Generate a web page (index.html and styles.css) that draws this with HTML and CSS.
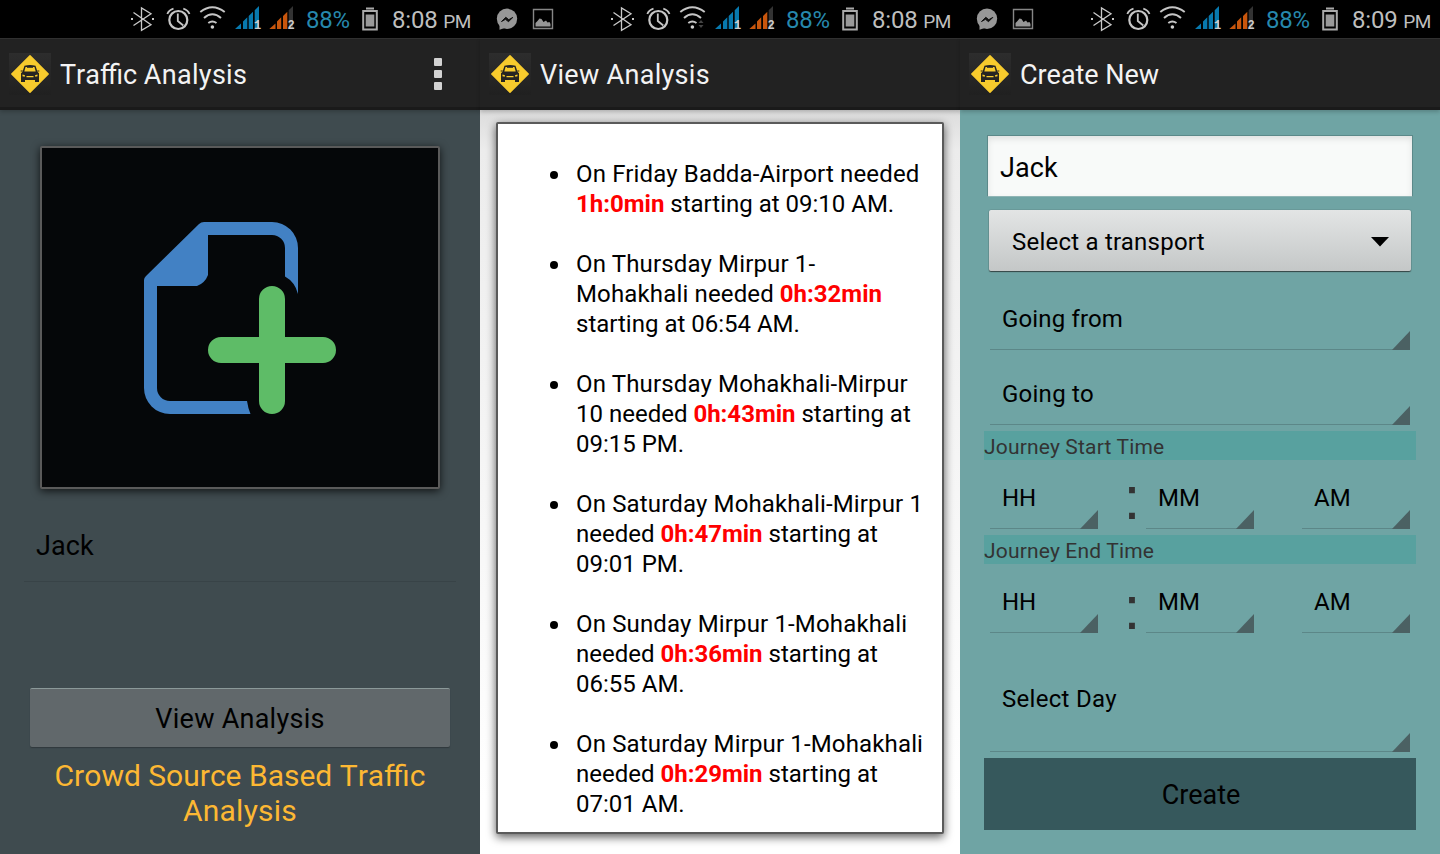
FILE: index.html
```html
<!DOCTYPE html>
<html lang="en">
<head>
<meta charset="utf-8">
<title>Traffic Analysis</title>
<link rel="stylesheet" href="styles.css">
</head>
<body>
<svg class="defs" aria-hidden="true">
  <symbol id="chat" viewBox="0 0 22 38">
    <circle cx="11" cy="18.800" r="10.200" fill="#979797"/>
    <path d="M3.500 23v6.700l6-2z" fill="#979797"/>
    <path d="M5.500 21.500l4.300-4.200 3 2.400 4-2.300-4.300 4.300-3-2.400z" fill="#111" stroke="#111"/>
  </symbol>
  <symbol id="picture" viewBox="0 0 22 22">
    <path d="M1.500 1.500h19v19h-19z" fill="none" stroke="#868686" stroke-width="1.400"/>
    <path d="M3.500 18.500v-3.500l2-2 2-2.500 2 .5 2 3 2.500-1.500 1.500 2 2-.5 1 2v2.500z" fill="#979797"/>
  </symbol>
  <symbol id="radio" viewBox="130 0 166 38">
    <path d="M133.500 12.500L151 24.700l-9.500 5.700V8l9.500 5.700L133.500 25.500" fill="none" stroke="#c9c9c9" stroke-width="1.300"/>
    <path d="M131 18h2v2h-2zM152 18h2v2h-2z" fill="#c9c9c9"/>
    <g fill="none" stroke="#c6c6c6">
      <circle cx="178.300" cy="20" r="9" stroke-width="2.200"/>
      <path d="M177.800 13.500V21l5.500 4.500" stroke-width="1.800"/>
      <path d="M167.300 14Q169 10 173.500 8.700M189.500 14q-1.700-4-6.200-5.300" stroke-width="1.800"/>
      <path d="M200.300 12Q212.300 2.500 224.700 12" stroke-width="2"/>
      <path d="M204 18Q212.300 10.500 221 18M208.300 23Q212.300 20 216.500 23" stroke-width="2"/>
    </g>
    <circle cx="212.400" cy="27" r="1.800" fill="#d0d0d0"/>
    <path d="M235 29l6-5.500V29zM243 29v-7.500l4.300-4.200V29zM248.700 29V16l4.300-4.200V29zM254.700 29V10.200L259 6v23z" fill="#0879ae"/>
    <path d="M269.300 29l6.200-5.500V29zM277 29v-7.500l4.200-4.200V29zM283 29V16l4.300-4.200V29z" fill="#c8560d"/>
    <path d="M288.700 29V10.200L293 6v23z" fill="#333"/>
    <text x="254" y="29" class="sim">1</text>
    <text x="287.500" y="29" class="sim">2</text>
  </symbol>
  <symbol id="battery" viewBox="0 0 16 24">
    <path d="M4 1.500h8M1.200 4h13.600v18.500H1.200z" fill="none" stroke="#a9a9a9" stroke-width="2"/>
    <path d="M3.700 7.500h8.600v12H3.700z" fill="#999"/>
  </symbol>
  <symbol id="taxi" viewBox="0 0 42 42">
    <path d="M21 2.800L39.200 21 21 39.200 2.800 21z" fill="#f7cb2d" stroke="#f7cb2d" stroke-width="1.500" stroke-linejoin="round"/>
    <path d="M15.500 12.700q5.500-1.200 11 0l2 6.100 1.500 1.500V29h-4v-2H16v2h-4v-8.700l1.500-1.500z" fill="#252422"/>
    <path d="M16.500 14h9l1.200 4.500H15.300z" fill="#f7cb2d"/>
    <path d="M18 14.500h6" stroke="#252422" stroke-width=".8"/>
    <path d="M11.700 18h2M28.300 18h2" stroke="#252422" stroke-width="1.200"/>
    <path d="M13.500 21.500l2.500.8-.3 1.500-2.200-.5zM28.500 21.500l-2.500.8.3 1.500 2.200-.5zM17.500 23h7v1.300h-7z" fill="#f7cb2d"/>
  </symbol>
</svg>
<main class="screens">
  <section class="phone dark">
    <div class="status">
      <span class="push"></span>
      <svg class="radio"><use href="#radio"/></svg>
      <span class="percent">88%</span>
      <svg class="battery"><use href="#battery"/></svg>
      <span class="clock">8:08 <small>PM</small></span>
    </div>
    <header class="bar">
      <svg class="logo"><use href="#taxi"/></svg>
      <h1 class="title">Traffic <span class="wide">Analysis</span></h1>
      <span class="overflow"><i></i><i></i><i></i></span>
    </header>
    <div class="home">
      <div class="add-card">
        <svg class="add" viewBox="0 0 192 192">
          <path fill="#4281c4" d="M60 0H128A26 26 0 0 1 154 26V72Q151 60 141 54.500V26A13 13 0 0 0 128 13H64V53Q61 61 53 64H13V166A13 13 0 0 0 26 179H103Q104 186 106.500 192H26A26 26 0 0 1 0 166V58Q0 56 2 54L55 2Q57 0 60 0z"/>
          <path fill="#5ebc67" d="M115 115V77a13 13 0 0 1 26 0v38h38a13 13 0 0 1 0 26h-38v38a13 13 0 0 1-26 0v-38H77a13 13 0 0 1 0-26z"/>
        </svg>
      </div>
      <div class="name">Jack</div>
      <div class="view-button"><span class="wide">View Analysis</span></div>
      <p class="slogan">Crowd Source Based Traffic<br><span class="wide">Analysis</span></p>
    </div>
  </section>

  <section class="phone light">
    <div class="status">
      <svg class="messenger"><use href="#chat"/></svg>
      <svg class="picture"><use href="#picture"/></svg>
      <span class="push"></span>
      <svg class="radio"><use href="#radio"/><path d="M88.500 23l2.500-3 2.500 3zM88.500 25l2.500 3 2.500-3z" fill="#444"/></svg>
      <span class="percent">88%</span>
      <svg class="battery"><use href="#battery"/></svg>
      <span class="clock">8:08 <small>PM</small></span>
    </div>
    <header class="bar">
      <svg class="logo"><use href="#taxi"/></svg>
      <h1 class="title"><span class="wide">View Analysis</span></h1>
    </header>
    <div class="report">
      <ul class="trips">
        <li><span class="route">On Friday Badda-Airport needed</span><br><b>1h:0min</b> starting at 09:10 AM.</li>
        <li><span class="route">On Thursday Mirpur 1-<br>Mohakhali needed</span> <b>0h:32min</b><br>starting at 06:54 AM.</li>
        <li><span class="route">On Thursday Mohakhali-Mirpur</span><br>10 needed <b>0h:43min</b> starting at<br>09:15 PM.</li>
        <li><span class="route">On Saturday Mohakhali-Mirpur 1</span><br>needed <b>0h:47min</b> starting at<br>09:01 PM.</li>
        <li><span class="route">On Sunday Mirpur 1-Mohakhali</span><br>needed <b>0h:36min</b> starting at<br>06:55 AM.</li>
        <li><span class="route">On Saturday Mirpur 1-Mohakhali</span><br>needed <b>0h:29min</b> starting at<br>07:01 AM.</li>
      </ul>
    </div>
  </section>

  <section class="phone teal">
    <div class="status">
      <svg class="messenger"><use href="#chat"/></svg>
      <svg class="picture"><use href="#picture"/></svg>
      <span class="push"></span>
      <svg class="radio"><use href="#radio"/></svg>
      <span class="percent">88%</span>
      <svg class="battery"><use href="#battery"/></svg>
      <span class="clock">8:09 <small>PM</small></span>
    </div>
    <header class="bar">
      <svg class="logo"><use href="#taxi"/></svg>
      <h1 class="title short">Create New</h1>
    </header>
    <div class="form">
      <div class="field">Jack</div>
      <div class="transport"><span>Select a transport</span><svg class="caret" viewBox="0 0 18 10"><path d="M0 0h18L9 9.500z"/></svg></div>
      <div class="spinner from">Going from</div>
      <div class="spinner to">Going to</div>
      <div class="label">Journey Start Time</div>
      <div class="time">
        <div class="spinner">HH</div><span class="colon">:</span><div class="spinner">MM</div><div class="spinner last">AM</div>
      </div>
      <div class="label">Journey End Time</div>
      <div class="time">
        <div class="spinner">HH</div><span class="colon low">:</span><div class="spinner">MM</div><div class="spinner last">AM</div>
      </div>
      <div class="spinner day">Select Day</div>
      <div class="create">Create</div>
    </div>
  </section>
</main>
</body>
</html>
```
FILE: styles.css
```css
* { box-sizing: border-box; }
body { margin: 0; font-family: Roboto, "Noto Sans", sans-serif; color: #000; }
.defs { position: absolute; width: 0; height: 0; overflow: visible; }
.defs symbol { overflow: visible; }
.screens { display: grid; grid-template-columns: repeat(3, 480px); height: 854px; overflow: hidden; }
.phone { height: 854px; display: flex; flex-direction: column; }
.dark { background: #3f4b4f; }
.light { background: linear-gradient(#dcdcdc 110px, #ececec 150px, #fff 800px); }
.teal { background: #6fa4a4; }
.wide { letter-spacing: .25px; }

/* Status bar */
.status { display: flex; height: 38px; background: #000; flex: none; }
.push { flex: 1; }
.messenger { width: 22px; height: 38px; margin-left: 16px; }
.picture { width: 22px; height: 22px; margin: 8px 0 0 14px; }
.radio { width: 166px; height: 38px; overflow: visible; }
.sim { font: bold 12px "Liberation Mono", monospace; fill: #ccc; }
.percent { width: 55px; margin-left: 10px; font-size: 24px; letter-spacing: -.3px; line-height: 40px; color: #2688ad; }
.battery { width: 16px; height: 24px; margin: 7px 0 0 1px; }
.clock { width: 88px; margin-left: 14px; font-size: 24px; letter-spacing: -.2px; line-height: 40px; color: #bebebe; white-space: nowrap; }
.clock small { font-size: 19px; letter-spacing: -.5px; }

/* Action bar */
.bar { display: flex; height: 72px; flex: none; padding: 14px 38px 0 9px; background: #222; border-top: 1px solid #303030; border-bottom: 3px solid #1a1a1a; box-shadow: 0 2px 4px rgba(0, 0, 0, .2); }
.logo { width: 42px; height: 42px; background: linear-gradient(#2d2d2d, #202020); }
.title { flex: 1; margin: 0 0 0 9px; font-size: 27px; font-weight: 400; line-height: 44px; color: #f3f3f3; font-kerning: none; }
.title .wide { letter-spacing: .3px; }
.title.short { letter-spacing: -.05px; }
.overflow { display: grid; gap: 4px; align-content: start; padding-top: 5px; }
.overflow i { width: 8px; height: 8px; border-radius: 1px; background: #d2d2d2; }

/* Home */
.home { display: flex; flex-direction: column; padding: 36px 24px 0; }
.add-card { height: 343px; margin: 0 16px; padding: 74px 0 0 102px; background: #050709; border: 2px solid #5a5a5a; border-radius: 2px; box-shadow: 0 2px 9px rgba(0, 0, 0, .75); }
.add { display: block; width: 192px; height: 192px; }
.name { height: 93px; padding: 36px 12px 0; border-bottom: 1px solid #384347; font-size: 27px; line-height: 42px; letter-spacing: .1px; }
.view-button { height: 59px; margin: 106px 6px 0; background: #61686b; border-top: 1px solid #8b9999; border-radius: 2px; box-shadow: 0 1px 1px #30393c; text-align: center; font-size: 27px; line-height: 60px; }
.slogan { margin: 11px 0 0; font-size: 30px; line-height: 35px; text-align: center; color: #fdb833; font-kerning: none; }

/* Report */
.report { height: 712px; margin: 12px 16px 0; padding: 35px 0 0 78px; background: #fff; border: 2px solid #5a5a5a; border-radius: 2px; box-shadow: 0 3px 10px rgba(0, 0, 0, .65); }
.trips { list-style: none; margin: 0; padding: 0; font-size: 24px; line-height: 30px; }
.trips li { position: relative; margin-bottom: 30px; white-space: nowrap; }
.trips li::before { content: ""; position: absolute; left: -26px; top: 12px; width: 8px; height: 8px; border-radius: 50%; background: #000; }
.trips b { color: #f00; }
.route { letter-spacing: .15px; }

/* Form */
.form { padding: 25px 24px 0; font-size: 24px; }
.field { height: 62px; margin: 0 3px; padding-left: 12px; background: #f8faf9; border: 1px solid #5b8989; border-bottom-color: #8fb5b5; box-shadow: inset 0 3px 6px rgba(0, 0, 0, .1); font-size: 27px; line-height: 64px; letter-spacing: .1px; }
.transport { display: flex; justify-content: space-between; align-items: center; height: 61px; margin: 13px 5px 0; padding: 3px 22px 0 23px; background: linear-gradient(#e3e5e5, #c4c7c7); border-radius: 2px; box-shadow: 0 1px 1px #344, 0 0 1px #344; letter-spacing: .22px; }
.caret { width: 18px; height: 10px; }
.spinner { position: relative; height: 70px; margin: 0 6px; padding-left: 12px; line-height: 78px; border-bottom: 1px solid #5c8788; }
.spinner::after { content: ""; position: absolute; right: 0; bottom: -1px; width: 18px; height: 19px; background: #4b6163; clip-path: polygon(100% 0, 100% 100%, 0 100%); }
.from { margin-top: 9px; letter-spacing: .15px; }
.to { margin-top: 5px; letter-spacing: .25px; }
.label { height: 29px; margin-top: 6px; background: #58a19f; color: #333; font-size: 21px; line-height: 32px; letter-spacing: .17px; }
.time { display: flex; height: 69px; }
.time .spinner { width: 108px; height: 69px; line-height: 76px; }
.time .last { margin-left: 42px; }
.colon { width: 18px; margin: 0 -1px 0 19px; text-align: center; color: #333; font-family: "Liberation Sans", sans-serif; font-size: 61px; line-height: 76px; }
.colon.low { padding-top: 6px; }
.day { height: 119px; line-height: 132px; letter-spacing: .3px; }
.create { height: 72px; margin-top: 6px; background: #36585c; text-align: center; font-size: 27px; line-height: 75px; padding-left: 2px; }
```
